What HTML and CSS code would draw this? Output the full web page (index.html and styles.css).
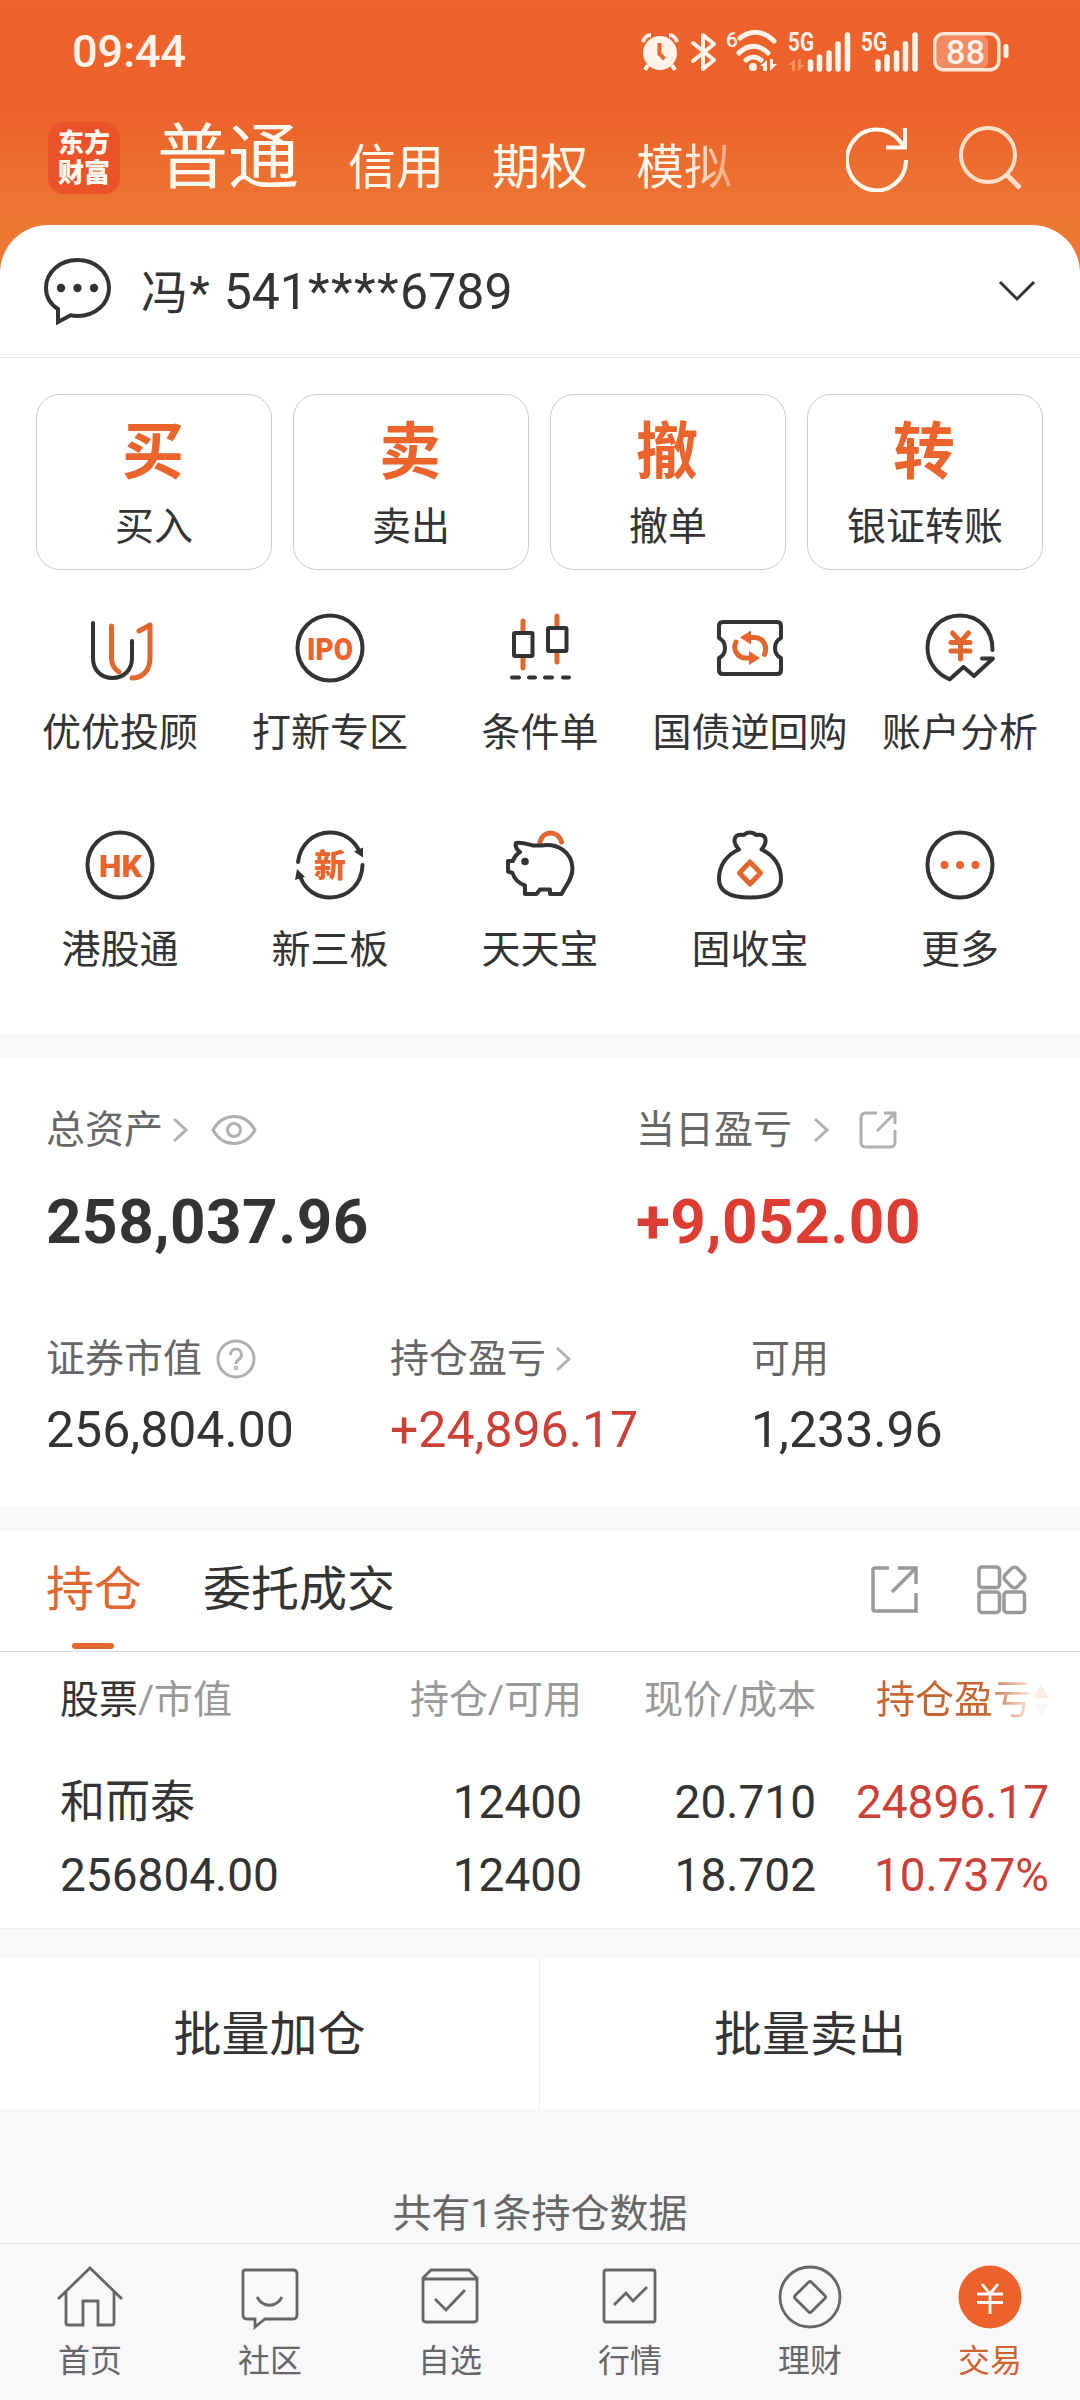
FILE: index.html
```html
<!DOCTYPE html>
<html lang="zh-CN">
<head>
    <meta charset="UTF-8">
    <meta name="viewport" content="width=device-width, initial-scale=1.0">
    <title>交易</title>
    <link rel="stylesheet" href="styles.css">
</head>
<body>
    <header class="header">
        <div class="status-bar">
            <span class="time">09:44</span>
            <div class="status-icons">
                <svg class="alarm" width="38" height="38" viewBox="0 0 38 38">
                    <circle cx="19" cy="20" r="17" fill="#fff3ea"/>
                    <path d="M2 9C3 5 6 2 10 2M28 2c4 0 7 3 8 7M7 32l-3 5M31 32l3 5" stroke="#fff3ea" stroke-width="4" fill="none"/>
                    <path d="M18.500 10v11l5 5" stroke="#ee632c" stroke-width="4" fill="none"/>
                </svg>
                <svg class="bluetooth" width="26" height="40" viewBox="0 0 26 40">
                    <path d="M2 11l21 17-11 9V3l11 9L2 29" stroke="#fff3ea" stroke-width="4" stroke-linejoin="round" stroke-linecap="round" fill="none"/>
                </svg>
                <svg class="wifi" width="52" height="58" viewBox="0 -8 52 58">
                    <text x="0" y="16" font-size="21" font-weight="500" fill="#fff3ea">6</text>
                    <path d="M14 7c11-8 23-8 34 3M13 22c9-9 20-9 29 0M20 29c5-4 10-4 15 0" stroke="#fff3ea" stroke-width="5" stroke-linecap="round" fill="none"/>
                    <circle cx="27" cy="36" r="4" fill="#fff3ea"/>
                    <path d="M41 29v11h-4v-5h-3zM44 40V28h3v5h4z" fill="#fff3ea"/>
                </svg>
                <svg class="signal" width="63" height="58" viewBox="0 -8 63 58">
                    <text x="0" y="20" font-size="25" font-weight="700" textLength="26" lengthAdjust="spacingAndGlyphs" fill="#fff3ea">5G</text>
                    <path d="M7 28v12H4v-6H0zM10 40V28h3v6h4z" fill="#f6905f"/>
                    <path d="M22.500 31v7M31.500 26v12M41 22v16M50 13v25M59.500 4v34" stroke="#fff3ea" stroke-width="5.500" stroke-linecap="round"/>
                </svg>
                <svg class="signal-2" width="58" height="58" viewBox="0 -8 58 58">
                    <text x="0" y="20" font-size="25" font-weight="700" textLength="26" lengthAdjust="spacingAndGlyphs" fill="#fff3ea">5G</text>
                    <path d="M17 31v7M26 26v12M35.500 22v16M44.500 13v25M54 4v34" stroke="#fff3ea" stroke-width="5.500" stroke-linecap="round"/>
                </svg>
                <svg width="76" height="40" viewBox="0 0 76 40">
                    <rect x="4" y="4" width="51" height="32" rx="6" fill="#f28a62"/>
                    <rect x="1.800" y="1.800" width="64" height="36" rx="9" fill="none" stroke="#ffe7da" stroke-width="3.500"/>
                    <rect x="70.500" y="12" width="5" height="14" rx="2.500" fill="#fff3ea"/>
                    <text x="13" y="32" font-size="34" font-weight="500" textLength="39" fill="#fff3ea">88</text>
                </svg>
            </div>
        </div>
        <div class="account-tabs">
            <div class="logo">东方<br>财富</div>
            <span class="account-tab current">普通</span>
            <span class="account-tab">信用</span>
            <span class="account-tab">期权</span>
            <span class="account-tab fading">模拟</span>
            <svg class="refresh" width="64" height="68" viewBox="0 0 64 68">
                <path d="M60 36a29.500 30.500 0 1 1-6-18.500M59 4v19.500H40M59 23.500 51 14" fill="none" stroke="#fffaf0" stroke-width="4"/>
            </svg>
            <svg class="search" width="64" height="68" viewBox="0 0 64 68">
                <circle cx="29" cy="31" r="27" fill="none" stroke="#ffe0cb" stroke-width="4"/>
                <path d="M48 51l13 13" stroke="#ffe0cb" stroke-width="5"/>
            </svg>
        </div>
    </header>

    <main>
        <section class="account">
            <svg width="68" height="68" viewBox="0 0 68 68">
                <path d="M14 52C6 47 2 39 2 31 2 15 16 3 33.500 3S65 15 65 31 51 59 33.500 59c-2.500 0-5-.2-7-.7L14 65z" fill="none" stroke="#333" stroke-width="4"/>
                <g fill="#333"><circle cx="17" cy="31" r="4.200"/><circle cx="33.500" cy="31" r="4.200"/><circle cx="50" cy="31" r="4.200"/></g>
            </svg>
            <span class="account-name"><span class="surname">冯*</span> 541<span class="mask">****</span>6789</span>
            <svg width="38" height="22" viewBox="0 0 38 22">
                <path d="M2 2l17 17L36 2" fill="none" stroke="#333" stroke-width="3"/>
            </svg>
        </section>

        <section class="trade-cards">
            <div class="trade-card"><b>买</b><span>买入</span></div>
            <div class="trade-card"><b>卖</b><span>卖出</span></div>
            <div class="trade-card"><b>撤</b><span>撤单</span></div>
            <div class="trade-card"><b>转</b><span>银证转账</span></div>
        </section>

        <section class="functions">
            <div class="function">
                <svg viewBox="0 0 72 72">
                    <path class="dark" d="M9 11v35c0 12 8 20 19.500 20S48 58 48 46V29"/>
                    <path class="orange" d="M27.500 14v32c0 6 3 11 7.500 14M48 66c11 0 18-8 18-20V13l-11 6"/>
                </svg>
                <span>优优投顾</span>
            </div>
            <div class="function">
                <svg viewBox="0 0 72 72">
                    <circle class="dark" cx="36" cy="36" r="32.500"/>
                    <text x="13" y="47.500" font-size="32" textLength="46" lengthAdjust="spacingAndGlyphs">IPO</text>
                </svg>
                <span>打新专区</span>
            </div>
            <div class="function">
                <svg viewBox="0 0 72 72">
                    <path class="orange" d="M19 9v9M19 47v9M53 4v9M53 42v8"/>
                    <rect class="dark" x="10" y="21" width="18.500" height="23" rx="1"/>
                    <rect class="dark" x="44" y="16" width="18.500" height="23" rx="1"/>
                    <path class="dark" d="M8 65.500h7M25 65.500h6M41 65.500h7M59 65.500h6"/>
                </svg>
                <span>条件单</span>
            </div>
            <div class="function">
                <svg viewBox="0 0 72 72">
                    <path class="dark" d="M9 10h54q4 0 4 4v12c-8 4-8 16 0 20v12q0 4-4 4H9q-4 0-4-4V46c8-4 8-16 0-20V14q0-4 4-4z"/>
                    <path class="orange" d="M34 25.500h6c9 0 14 8 10.500 17M22 30c-4 8 2 16 10 16h6"/>
                    <path class="orange-fill" d="M26 25.500l11-7v14zM46 46l-11 7V39z"/>
                </svg>
                <span>国债逆回购</span>
            </div>
            <div class="function">
                <svg viewBox="0 0 72 72">
                    <path class="dark" d="M68.500 38C69 18 55 3.500 36 3.500S3.500 18 3.500 36c0 14 9 26 22.300 31.300L39.500 55 50 64l19-17.500H58"/>
                    <path class="orange" d="M28.500 21l8 9 8-9M27 30.500h19M27 39h19M36.500 31v16"/>
                </svg>
                <span>账户分析</span>
            </div>
            <div class="function">
                <svg viewBox="0 0 72 72">
                    <circle class="dark" cx="36" cy="36" r="32.500"/>
                    <text x="15" y="47.500" font-size="32" textLength="43" lengthAdjust="spacingAndGlyphs">HK</text>
                </svg>
                <span>港股通</span>
            </div>
            <div class="function">
                <svg viewBox="0 0 72 72">
                    <path class="dark" d="M4 33C6 16 19 3.500 36 3.500c13 0 23 7 28.500 17M68.500 36C68 55 54 68.500 36 68.500c-13 0-24-7-29-19"/>
                    <path class="dark-fill" d="M69 28.500l-9-6 9-4zM3 40l-2 11 10-3z"/>
                    <text x="20" y="47.500" font-size="32">新</text>
                </svg>
                <span>新三板</span>
            </div>
            <div class="function">
                <svg viewBox="0 0 72 72">
                    <path class="orange" d="M36 13c3-12 18-12 21.500 0"/>
                    <path class="dark" d="M16 23c-4-3-5-6-4-9 6-1 11 1 17 2.500h8c17-3 31 7 31.500 23 0 10-6 16-11 25.500H46v-4.500H36L32.500 65H21v-8.500C14 54 10 49 8.500 44L4 42.500V32h5c1-4 4-7 7-9z"/>
                    <circle class="dark-fill" cx="21" cy="32.500" r="3.800"/>
                </svg>
                <span>天天宝</span>
            </div>
            <div class="function">
                <svg viewBox="0 0 72 72">
                    <path class="dark" d="M25 20.500C18 13 19 4 30 6c3-3.500 9-3.500 12 0 11-2 12 7 5.500 14.500C60 26 67 37 67 50c0 12-9 18.500-31 18.500S5 62 5 50c0-13 7-24 20-29.500z"/>
                    <path class="orange diamond" d="M36 33l10.500 11L36 55 25.500 44z"/>
                </svg>
                <span>固收宝</span>
            </div>
            <div class="function">
                <svg viewBox="0 0 72 72">
                    <circle class="dark" cx="36" cy="36" r="32.500"/>
                    <g class="orange-fill"><circle cx="20.500" cy="36" r="4"/><circle cx="36" cy="36" r="4"/><circle cx="51.500" cy="36" r="4"/></g>
                </svg>
                <span>更多</span>
            </div>
        </section>

        <section class="assets">
            <div class="totals">
                <div class="asset">
                    <div class="asset-label">
                        总资产
                        <svg class="arrow" width="16" height="26" viewBox="0 0 16 26"><path d="M2 2l12 11L2 24"/></svg>
                        <svg class="eye" width="46" height="32" viewBox="0 0 46 32"><path d="M2 16C12-2 34-2 44 16 34 34 12 34 2 16z"/><circle cx="23" cy="16" r="6.500"/></svg>
                    </div>
                    <div class="asset-total">258,037.96</div>
                </div>
                <div class="asset">
                    <div class="asset-label">
                        当日盈亏
                        <svg class="arrow day" width="16" height="26" viewBox="0 0 16 26"><path d="M2 2l12 11L2 24"/></svg>
                        <svg class="share" width="38" height="38" viewBox="0 0 38 38"><path d="M18 2H7Q2 2 2 7v24q0 5 5 5h24q5 0 5-5V19M25 2h11v11M36 2L18 20"/></svg>
                    </div>
                    <div class="asset-total up">+9,052.00</div>
                </div>
            </div>
            <div class="details">
                <div class="asset">
                    <div class="asset-label">
                        证券市值
                        <svg class="help" width="40" height="40" viewBox="0 0 40 40"><circle cx="20" cy="20" r="18"/><path d="M14.500 16c0-8 11-8 11 0 0 5-5.500 4-5.500 9"/><circle cx="20" cy="29" r=".8"/></svg>
                    </div>
                    <div class="asset-value">256,804.00</div>
                </div>
                <div class="asset">
                    <div class="asset-label">
                        持仓盈亏
                        <svg class="arrow" width="16" height="26" viewBox="0 0 16 26"><path d="M2 2l12 11L2 24"/></svg>
                    </div>
                    <div class="asset-value up">+24,896.17</div>
                </div>
                <div class="asset">
                    <div class="asset-label">可用</div>
                    <div class="asset-value">1,233.96</div>
                </div>
            </div>
        </section>

        <section class="positions">
            <div class="position-tabs">
                <span class="position-tab active">持仓</span>
                <span class="position-tab">委托成交</span>
                <svg class="export" width="48" height="50" viewBox="0 0 48 50"><path d="M19 3H5Q3 3 3 5v39q0 2 2 2h41V28M28 3h18v16M45 4L22 27"/></svg>
                <svg width="50" height="50" viewBox="0 0 50 50"><rect x="2" y="2" width="20.500" height="20.500" rx="3"/><rect x="2" y="27" width="20.500" height="20.500" rx="3"/><rect x="27" y="27" width="20.500" height="20.500" rx="3"/><rect x="29" y="4" width="17" height="17" rx="4" transform="rotate(45 37.500 12.500)"/></svg>
            </div>
            <div class="table-row table-head">
                <span><em>股票</em>/市值</span>
                <span>持仓/可用</span>
                <span>现价/成本</span>
                <span class="sort"><i>持仓盈亏</i><svg width="16" height="36" viewBox="0 0 16 36"><path d="M0 15L8 1l8 14z" fill="#fdece3"/><path d="M0 21l8 14 8-14z" fill="#f8f8f8"/></svg></span>
            </div>
            <div class="table-row name-row">
                <span>和而泰</span>
                <span>12400</span>
                <span>20.710</span>
                <span class="up">24896.17</span>
            </div>
            <div class="table-row">
                <span>256804.00</span>
                <span>12400</span>
                <span>18.702</span>
                <span class="up">10.737%</span>
            </div>
        </section>

        <section class="batch">
            <div>批量加仓</div>
            <div>批量卖出</div>
        </section>

        <p class="count">共有1条持仓数据</p>
    </main>

    <nav class="bottom-nav">
        <div class="nav-item">
            <svg viewBox="0 0 68 68"><path d="M2 36L34 5l32 31M10 29v31q0 2 2 2h15V38h15v24h14q2 0 2-2V29"/></svg>
            <span>首页</span>
        </div>
        <div class="nav-item">
            <svg viewBox="0 0 68 68"><path d="M9 7h48q4 0 4 4v41q0 4-4 4H29l-10 8v-8H11q-4 0-4-4V9q0-2 2-2zM21 34c6 11 19 11 25 0"/></svg>
            <span>社区</span>
        </div>
        <div class="nav-item">
            <svg viewBox="0 0 68 68"><path d="M7 15l8-8h38l8 8v41q0 3-3 3H10q-3 0-3-3zM7 16h54M19 36l11 11 19-20"/></svg>
            <span>自选</span>
        </div>
        <div class="nav-item">
            <svg viewBox="0 0 68 68"><rect x="8" y="7" width="51" height="52" rx="2"/><path d="M18 42l12-12 7 8 14-14"/></svg>
            <span>行情</span>
        </div>
        <div class="nav-item">
            <svg viewBox="0 0 68 68"><circle cx="34" cy="34" r="30"/><rect x="22.500" y="22.500" width="23" height="23" rx="2" transform="rotate(45 34 34)"/></svg>
            <span>理财</span>
        </div>
        <div class="nav-item active">
            <svg viewBox="0 0 68 68"><circle class="coin" cx="34" cy="34" r="31.500"/><path class="yen" d="M26 21l8 10 8-10M21 31h26M21 39.500h26M34 31v20"/></svg>
            <span>交易</span>
        </div>
    </nav>
</body>
</html>
```
FILE: styles.css
```css
* {
    box-sizing: border-box;
}
body {
    margin: 0;
    width: 1080px;
    height: 2400px;
    overflow: hidden;
    display: flex;
    flex-direction: column;
    background: #f7f8fa;
    color: #333;
    font-family: Roboto, "Noto Sans CJK SC", sans-serif;
    font-size: 39px;
    line-height: 50px;
}
svg {
    display: block;
    flex: none;
}
.up {
    color: #cc4037;
}

/* header */
.header {
    height: 275px;
    margin-bottom: -50px;
    background: linear-gradient(#ee632c 0, #ed622b 108px, #ed7834 220px);
}
.status-bar {
    height: 102px;
    padding: 2px 71px 0 72px;
    display: flex;
    justify-content: space-between;
    align-items: center;
}
.time {
    font-size: 45px;
    font-weight: 500;
    color: #fff3ea;
}
.status-icons {
    display: flex;
    align-items: center;
}
.alarm {
    margin-right: 12px;
}
.bluetooth {
    margin-right: 9px;
}
.wifi {
    margin-right: 10px;
}
.signal {
    margin-right: 10px;
}
.signal-2 {
    margin-right: 14px;
}
.account-tabs {
    height: 112px;
    padding: 0 36px 0 48px;
    display: flex;
    align-items: center;
    color: #fffaf0;
}
.logo {
    width: 72px;
    height: 72px;
    margin-right: 37px;
    padding-top: 6px;
    border-radius: 16px;
    background: #ea5329;
    text-align: center;
    font-size: 26px;
    font-weight: 900;
    line-height: 30px;
}
.account-tab {
    width: 144px;
    padding-top: 20px;
    font-size: 48px;
}
.current {
    width: 191px;
    padding-top: 0;
    font-size: 71px;
}
.fading {
    width: 96px;
    background: linear-gradient(to right, #fffaf0 50%, #f5a377 100%);
    -webkit-background-clip: text;
    background-clip: text;
    color: transparent;
}
.refresh {
    margin-left: auto;
    margin-right: 49px;
}
.search {
    margin-right: 21px;
}

/* account */
.account {
    height: 133px;
    padding: 0 44px;
    display: flex;
    align-items: center;
    background: #fff;
    border-bottom: 1px solid #e6e6e6;
    border-radius: 48px 48px 0 0;
}
.account-name {
    flex: 1;
    margin-left: 29px;
    padding-top: 2px;
    font-size: 50px;
}
.surname {
    font-size: 47px;
    letter-spacing: 1.5px;
}
.mask {
    letter-spacing: 1.5px;
}

/* trade cards */
.trade-cards {
    display: grid;
    grid-template-columns: repeat(4, 1fr);
    gap: 21px;
    padding: 36px 37px 0 36px;
    background: #fff;
}
.trade-card {
    height: 176px;
    border: 1px solid #ccc;
    border-radius: 24px;
    display: flex;
    flex-direction: column;
    align-items: center;
}
.trade-card b {
    margin: 22px 2px 0 0;
    font-size: 62px;
    line-height: 72px;
    color: #ea642c;
}
.trade-card span {
    margin-top: 13px;
}

/* functions */
.functions {
    height: 463px;
    padding: 42px 15px 0;
    display: grid;
    grid-template-columns: repeat(5, 210px);
    grid-auto-rows: 217px;
    background: #fff;
}
.function {
    display: flex;
    flex-direction: column;
    align-items: center;
    white-space: nowrap;
}
.function svg {
    width: 72px;
    height: 72px;
    margin-bottom: 24px;
}
.function text {
    font-weight: 900;
    fill: #ea642c;
}
.dark,
.orange {
    fill: none;
    stroke: #333;
    stroke-width: 4;
    stroke-linecap: round;
    stroke-linejoin: round;
}
.orange {
    stroke: #e2672f;
    stroke-width: 5;
}
.dark-fill {
    fill: #333;
}
.orange-fill {
    fill: #ea642c;
}

/* assets */
.assets {
    height: 450px;
    margin-top: 24px;
    padding: 48px 46px 0;
    background: #fff;
}
.totals,
.details {
    display: grid;
}
.totals {
    grid-template-columns: 590px 1fr;
    height: 229px;
}
.details {
    grid-template-columns: 344px 361px 1fr;
}
.asset-label {
    height: 50px;
    display: flex;
    align-items: center;
    color: #666;
}
.asset-label svg {
    fill: none;
    stroke: #b0b0b0;
    stroke-width: 3;
}
.arrow {
    margin-left: 9px;
}
.arrow.day {
    margin-left: 21px;
}
.eye {
    margin-left: 23px;
}
.share {
    margin-left: 30px;
}
.help {
    margin-left: 14px;
}
.asset-total {
    margin-top: 42px;
    font-size: 62px;
    font-weight: 700;
    letter-spacing: 0.5px;
}
.asset-total.up {
    color: #dc3c32;
}
.asset-value {
    margin-top: 21px;
    font-size: 50px;
}

/* positions */
.positions {
    height: 398px;
    margin-top: 24px;
    background: #fff;
    border-bottom: 1px solid #eee;
}
.position-tabs {
    height: 121px;
    padding: 0 53px 2px 46px;
    display: flex;
    align-items: center;
    border-bottom: 1px solid #ddd;
}
.position-tabs svg {
    fill: none;
    stroke: #999;
    stroke-width: 3.5;
}
.position-tab {
    position: relative;
    margin-right: 61px;
    font-size: 48px;
}
.position-tab.active {
    color: #e2672f;
}
.position-tab.active::after {
    content: "";
    position: absolute;
    left: 26px;
    bottom: -34px;
    width: 42px;
    height: 6px;
    border-radius: 3px;
    background: #e2672f;
}
.position-tabs .export {
    margin-left: auto;
    margin-right: 59px;
}
.table-row {
    padding: 0 31px 0 60px;
    display: grid;
    grid-template-columns: 303px 219px 234px 1fr;
    font-size: 46px;
    line-height: 73px;
    text-align: right;
}
.table-row span:first-child {
    text-align: left;
}
.table-head {
    height: 114px;
    font-size: 39px;
    line-height: 97px;
    color: #999;
}
.table-head em {
    font-style: normal;
    color: #333;
}
.sort {
    display: flex;
    align-items: center;
    justify-content: flex-end;
    height: 97px;
}
.sort i {
    margin-right: 1px;
    font-style: normal;
    background: linear-gradient(to right, #c8642f 70%, #fbeae0 100%);
    -webkit-background-clip: text;
    background-clip: text;
    color: transparent;
}
.name-row span:first-child {
    font-size: 45px;
}

/* batch */
.batch {
    display: grid;
    grid-template-columns: 1fr 1fr;
    height: 150px;
    margin-top: 30px;
    background: #fff;
    font-size: 48px;
    line-height: 152px;
    text-align: center;
}
.batch div:first-child {
    border-right: 1px solid #eee;
}
.count {
    margin: 80px 0 0;
    text-align: center;
    color: #666;
}

/* bottom nav */
.bottom-nav {
    height: 157px;
    margin-top: auto;
    padding-top: 19px;
    display: grid;
    grid-template-columns: repeat(6, 180px);
    background: #f8f8fb;
    border-top: 1px solid #e3e4e6;
    color: #666;
}
.nav-item {
    display: flex;
    flex-direction: column;
    align-items: center;
    font-size: 32px;
}
.nav-item svg {
    width: 68px;
    height: 68px;
    margin-bottom: 5px;
    fill: none;
    stroke: #666;
    stroke-width: 2.8;
}
.nav-item.active {
    color: #cc6430;
}
.nav-item .coin {
    fill: #ed622b;
    stroke: none;
}
.nav-item .yen {
    stroke: #fff;
}
```
